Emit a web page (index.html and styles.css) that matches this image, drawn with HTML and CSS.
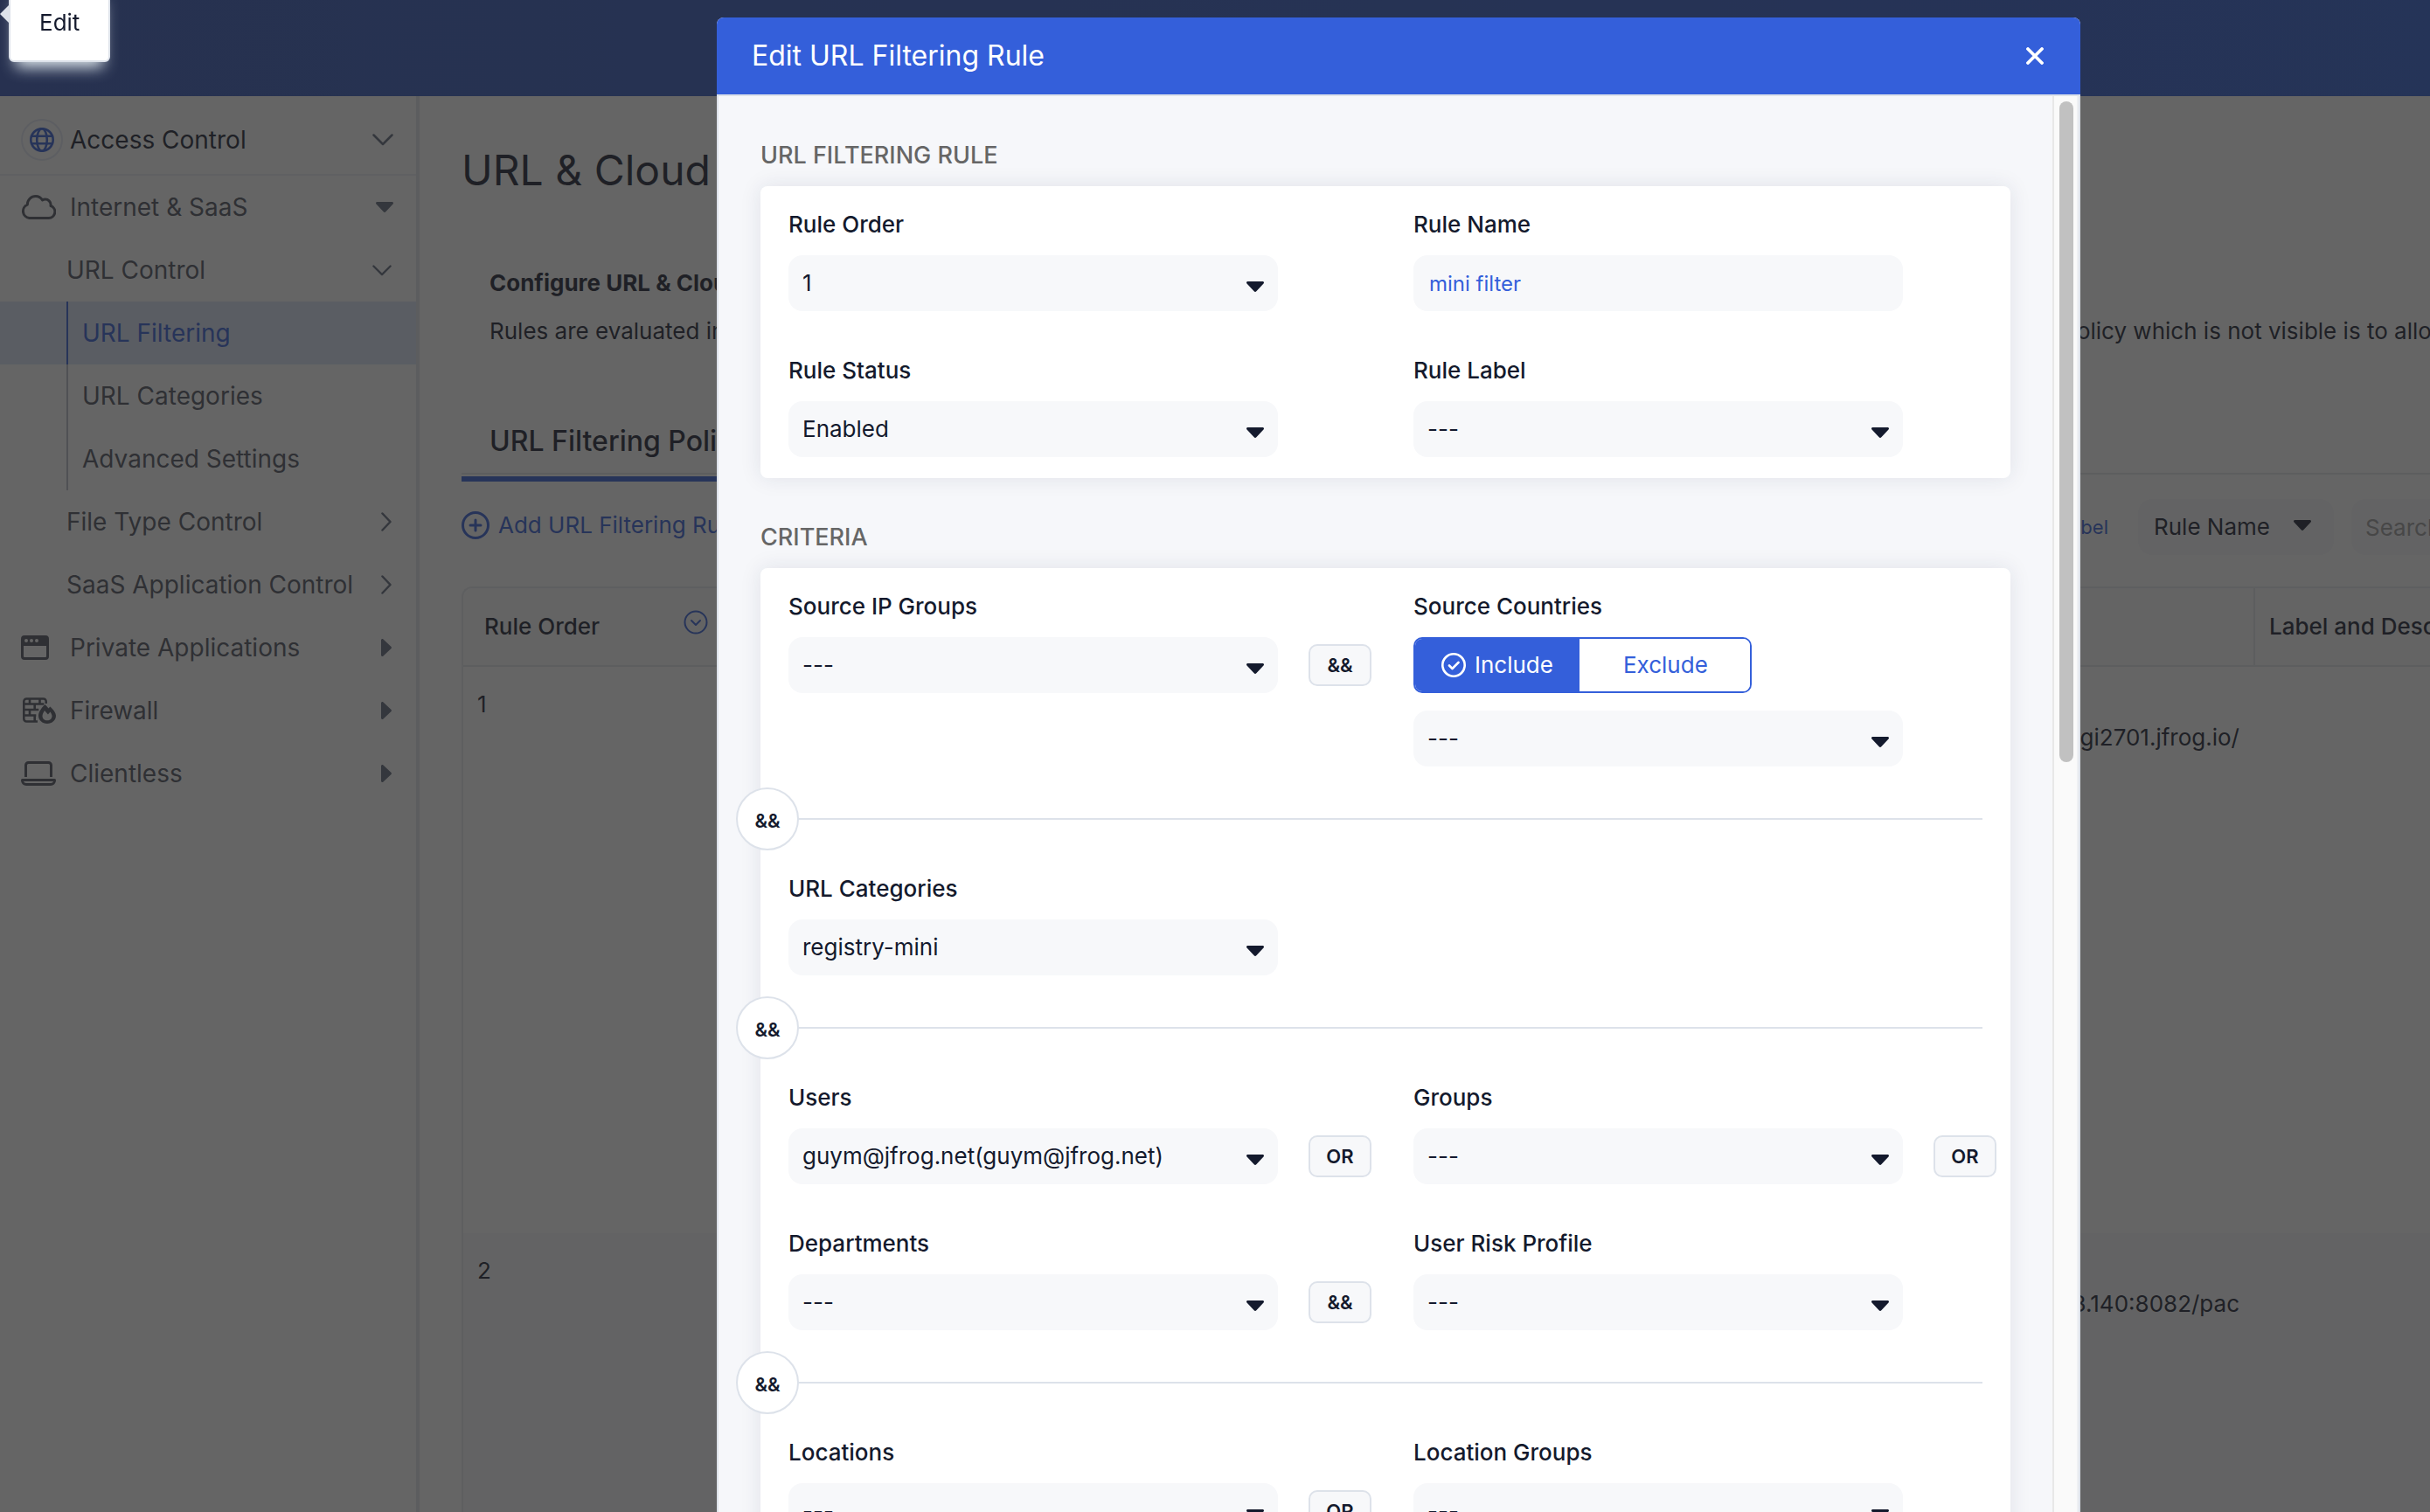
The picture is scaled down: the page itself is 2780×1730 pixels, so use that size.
FILE: index.html
```html
<!DOCTYPE html>
<html lang="en">
<head>
  <meta charset="UTF-8">
  <meta name="viewport" content="width=device-width, initial-scale=1.0">
  <title>Edit URL Filtering Rule</title>
  <link rel="stylesheet" href="styles.css">
</head>
<body>
  <!-- shared icons -->
  <svg class="sprite" aria-hidden="true">
    <symbol id="caret" viewBox="0 0 20 12"><path d="M1.5 0h17c1.4 0 2 1.600 1 2.500L11.300 11.300c-.7.8-1.900.8-2.600 0L.5 2.500C-.5 1.600.1 0 1.500 0z"/></symbol>
    <symbol id="caret-right" viewBox="0 0 12 20"><path d="M0 1.500v17c0 1.400 1.600 2 2.500 1L11.300 11.300c.8-.7.8-1.900 0-2.600L2.500.5C1.600-.5 0 .1 0 1.500z"/></symbol>
    <symbol id="chevron" viewBox="0 0 24 14"><path d="M1.500 1.500L12 12 22.500 1.500" fill="none" stroke="currentColor" stroke-width="2.500" stroke-linecap="round" stroke-linejoin="round"/></symbol>
    <symbol id="chevron-right" viewBox="0 0 12 22"><path d="M1.500 1.500L10.500 11 1.500 20.500" fill="none" stroke="currentColor" stroke-width="2.500" stroke-linecap="round" stroke-linejoin="round"/></symbol>
  </svg>

  <header class="topbar"></header>

  <div class="layout">
    <nav class="sidebar">
      <a class="nav-item nav-top" href="#">
        <span class="nav-icon">
          <svg class="line-icon globe" width="48" height="48" viewBox="0 0 48 48" stroke-width="2.600">
            <circle class="ring" cx="24" cy="24" r="23" stroke-width="2"/>
            <circle cx="24" cy="24" r="12.700"/>
            <ellipse cx="24" cy="24" rx="5.800" ry="12.700"/>
            <path d="M12 19.700h24M12 28.300h24"/>
          </svg>
        </span>
        <span class="nav-text">Access Control</span>
        <svg class="nav-arrow" width="24" height="14"><use href="#chevron"/></svg>
      </a>
      <a class="nav-item" href="#">
        <span class="nav-icon">
          <svg class="line-icon" width="40" height="28" viewBox="0 0 40 28" stroke-width="3" stroke-linejoin="round">
            <path d="M9.500 26.500A8 8 0 0 1 7.300 11.200C7.300 5.500 11.600 1.500 16.800 1.500c3.300 0 6.100 1.800 7.700 4.400 1-.6 2.100-.9 3.300-.9 3.500 0 6.300 2.800 6.300 6.300 0 .4 0 .8-.1 1.200A7.200 7.200 0 0 1 31.500 26.500z"/>
          </svg>
        </span>
        <span class="nav-text">Internet &amp; SaaS</span>
        <svg class="nav-arrow" width="20" height="12"><use href="#caret"/></svg>
      </a>
      <a class="nav-item nav-sub" href="#">
        <span class="nav-text">URL Control</span>
        <svg class="nav-arrow" width="22" height="13"><use href="#chevron"/></svg>
      </a>
      <a class="nav-item nav-leaf active" href="#"><span class="nav-text">URL Filtering</span></a>
      <a class="nav-item nav-leaf" href="#"><span class="nav-text">URL Categories</span></a>
      <a class="nav-item nav-leaf" href="#"><span class="nav-text">Advanced Settings</span></a>
      <a class="nav-item nav-sub" href="#">
        <span class="nav-text">File Type Control</span>
        <svg class="nav-arrow" width="12" height="22"><use href="#chevron-right"/></svg>
      </a>
      <a class="nav-item nav-sub" href="#">
        <span class="nav-text">SaaS Application Control</span>
        <svg class="nav-arrow" width="12" height="22"><use href="#chevron-right"/></svg>
      </a>
      <a class="nav-item nav-closed" href="#">
        <span class="nav-icon">
          <svg width="32" height="28" viewBox="0 0 32 28">
            <path fill-rule="evenodd" d="M4 0h24a4 4 0 0 1 4 4v20a4 4 0 0 1-4 4H4a4 4 0 0 1-4-4V4a4 4 0 0 1 4-4zM3 12v12a1 1 0 0 0 1 1h24a1 1 0 0 0 1-1V12zM6 4a2 2 0 1 0 0 4 2 2 0 0 0 0-4zm6 0a2 2 0 1 0 0 4 2 2 0 0 0 0-4zm6 0a2 2 0 1 0 0 4 2 2 0 0 0 0-4z"/>
          </svg>
        </span>
        <span class="nav-text">Private Applications</span>
        <svg class="nav-arrow" width="12" height="20"><use href="#caret-right"/></svg>
      </a>
      <a class="nav-item nav-closed" href="#">
        <span class="nav-icon">
          <svg class="line-icon" width="40" height="30" viewBox="0 0 40 30" stroke-width="2.600">
            <path d="M28.700 7V4.500a3 3 0 0 0-3-3H6.300a3 3 0 0 0-3 3v20a3 3 0 0 0 3 3H19"/>
            <path d="M3.300 7.500h23M3.300 14h17M3.300 20.500h14M10 1.500v6M21.500 1.500v6M15.700 7.500V14M10 14v6.500M15.700 20.500V27"/>
            <path fill="currentColor" fill-rule="evenodd" stroke="none" d="M27.500 8c1.600 1.400 2.900 2.900 4 4.500.6-.8 1.200-1.500 1.900-2.100 3.300 3 6.600 7.200 6.600 10.400C40 26 35.600 30 30 30s-10-4-10-9.200C20 17 23.300 11.800 27.500 8zm-3 13.300c0 3 2.400 5 5.500 5s5.500-2 5.500-5c0-1.300-.9-3.200-2-4.700l-2.600 3-3.900-4.600c-1.500 2.300-2.500 4.500-2.500 6.300z"/>
          </svg>
        </span>
        <span class="nav-text">Firewall</span>
        <svg class="nav-arrow" width="12" height="20"><use href="#caret-right"/></svg>
      </a>
      <a class="nav-item nav-closed" href="#">
        <span class="nav-icon">
          <svg class="line-icon" width="40" height="28" viewBox="0 0 40 28" stroke-width="3">
            <path d="M5.500 18V4.500a3 3 0 0 1 3-3h23a3 3 0 0 1 3 3V18M1.500 21.500h37v.5a4.500 4.500 0 0 1-4.500 4.500H6A4.500 4.500 0 0 1 1.500 22z" stroke-linejoin="round"/>
          </svg>
        </span>
        <span class="nav-text">Clientless</span>
        <svg class="nav-arrow" width="12" height="20"><use href="#caret-right"/></svg>
      </a>
    </nav>

    <main class="page">
      <h1>URL &amp; Cloud</h1>
      <div class="intro">
        <p class="intro-title">Configure URL &amp; Cloud App Control Policy</p>
        <p class="intro-text"><span>Rules are evaluated in order.</span><span class="intro-rest">policy which is not visible is to allow all</span></p>
      </div>

      <div class="tabs">
        <a class="tab" href="#">URL Filtering Policy</a>
      </div>

      <div class="toolbar">
        <button class="add-btn" type="button">
          <svg class="line-icon" width="32" height="32" viewBox="0 0 32 32" stroke-width="3" stroke-linecap="round">
            <circle cx="16" cy="16" r="14.500"/>
            <path d="M16 10v12M10 16h12"/>
          </svg>
          Add URL Filtering Rule
        </button>
        <div class="toolbar-right">
          <a class="small-link" href="#">Rule Label</a>
          <div class="select filter-select">
            <select aria-label="Search by"><option>Rule Name</option></select>
            <svg class="caret" width="20" height="12"><use href="#caret"/></svg>
          </div>
          <input class="search" type="text" placeholder="Search..." aria-label="Search">
        </div>
      </div>

      <table class="rules">
        <colgroup><col class="col-order"><col><col class="col-label"></colgroup>
        <thead>
          <tr>
            <th>
              <div class="th-order">Rule Order
                <svg class="line-icon" width="28" height="28" viewBox="0 0 28 28" stroke-width="2" stroke-linecap="round" stroke-linejoin="round">
                  <circle cx="14" cy="14" r="12.500"/>
                  <path d="M9 12l5 5 5-5"/>
                </svg>
              </div>
            </th>
            <th></th>
            <th>Label and Description</th>
          </tr>
        </thead>
        <tbody>
          <tr>
            <td>1</td>
            <td><div>URL</div><div class="url">digi2701.jfrog.io/</div></td>
            <td></td>
          </tr>
          <tr>
            <td>2</td>
            <td><div>URL</div><div class="url">3.140:8082/pac</div></td>
            <td></td>
          </tr>
        </tbody>
      </table>
    </main>
  </div>

  <div class="backdrop">
    <div class="modal" role="dialog" aria-labelledby="modal-title">
      <div class="modal-header">
        <h2 id="modal-title">Edit URL Filtering Rule</h2>
        <button class="close" type="button" aria-label="Close">
          <svg class="line-icon" width="20" height="20" viewBox="0 0 20 20" stroke-width="3.800" stroke-linecap="round"><path d="M2 2l16 16M18 2L2 18"/></svg>
        </button>
      </div>
      <div class="modal-body">
        <form class="modal-content">
          <h3>URL FILTERING RULE</h3>
          <section class="card">
            <div class="row">
              <div class="field">
                <label for="rule-order">Rule Order</label>
                <div class="select">
                  <select id="rule-order"><option>1</option></select>
                  <svg class="caret" width="20" height="12"><use href="#caret"/></svg>
                </div>
              </div>
              <div class="field">
                <label for="rule-name">Rule Name</label>
                <input id="rule-name" class="text-input" type="text" value="mini filter">
              </div>
            </div>
            <div class="row">
              <div class="field">
                <label for="rule-status">Rule Status</label>
                <div class="select">
                  <select id="rule-status"><option>Enabled</option></select>
                  <svg class="caret" width="20" height="12"><use href="#caret"/></svg>
                </div>
              </div>
              <div class="field">
                <label for="rule-label">Rule Label</label>
                <div class="select">
                  <select id="rule-label"><option>---</option></select>
                  <svg class="caret" width="20" height="12"><use href="#caret"/></svg>
                </div>
              </div>
            </div>
          </section>

          <h3>CRITERIA</h3>
          <section class="card">
            <div class="row">
              <div class="field">
                <label for="source-ip">Source IP Groups</label>
                <div class="select">
                  <select id="source-ip"><option>---</option></select>
                  <svg class="caret" width="20" height="12"><use href="#caret"/></svg>
                </div>
                <span class="op">&amp;&amp;</span>
              </div>
              <div class="field">
                <label for="source-countries">Source Countries</label>
                <div class="toggle">
                  <button class="on" type="button">
                    <svg class="line-icon" width="28" height="28" viewBox="0 0 28 28" stroke-width="2.600" stroke-linecap="round" stroke-linejoin="round">
                      <circle cx="14" cy="14" r="12.700"/>
                      <path d="M9 14.500l3.500 3.500 7-7"/>
                    </svg>
                    Include
                  </button>
                  <button type="button">Exclude</button>
                </div>
                <div class="select">
                  <select id="source-countries"><option>---</option></select>
                  <svg class="caret" width="20" height="12"><use href="#caret"/></svg>
                </div>
              </div>
            </div>

            <div class="divider"><span>&amp;&amp;</span></div>

            <div class="row">
              <div class="field">
                <label for="url-categories">URL Categories</label>
                <div class="select">
                  <select id="url-categories"><option>registry-mini</option></select>
                  <svg class="caret" width="20" height="12"><use href="#caret"/></svg>
                </div>
              </div>
            </div>

            <div class="divider"><span>&amp;&amp;</span></div>

            <div class="row">
              <div class="field">
                <label for="users">Users</label>
                <div class="select">
                  <select id="users"><option>guym@jfrog.net(guym@jfrog.net)</option></select>
                  <svg class="caret" width="20" height="12"><use href="#caret"/></svg>
                </div>
                <span class="op">OR</span>
              </div>
              <div class="field">
                <label for="groups">Groups</label>
                <div class="select">
                  <select id="groups"><option>---</option></select>
                  <svg class="caret" width="20" height="12"><use href="#caret"/></svg>
                </div>
                <span class="op">OR</span>
              </div>
            </div>
            <div class="row">
              <div class="field">
                <label for="departments">Departments</label>
                <div class="select">
                  <select id="departments"><option>---</option></select>
                  <svg class="caret" width="20" height="12"><use href="#caret"/></svg>
                </div>
                <span class="op">&amp;&amp;</span>
              </div>
              <div class="field">
                <label for="risk-profile">User Risk Profile</label>
                <div class="select">
                  <select id="risk-profile"><option>---</option></select>
                  <svg class="caret" width="20" height="12"><use href="#caret"/></svg>
                </div>
              </div>
            </div>

            <div class="divider"><span>&amp;&amp;</span></div>

            <div class="row">
              <div class="field">
                <label for="locations">Locations</label>
                <div class="select">
                  <select id="locations"><option>---</option></select>
                  <svg class="caret" width="20" height="12"><use href="#caret"/></svg>
                </div>
                <span class="op">OR</span>
              </div>
              <div class="field">
                <label for="location-groups">Location Groups</label>
                <div class="select">
                  <select id="location-groups"><option>---</option></select>
                  <svg class="caret" width="20" height="12"><use href="#caret"/></svg>
                </div>
              </div>
            </div>
          </section>
        </form>
        <div class="scrollbar"><div class="thumb"></div></div>
      </div>
    </div>
  </div>

  <div class="tooltip">Edit</div>
</body>
</html>
```

FILE: styles.css
```css
* {
  box-sizing: border-box;
}

body {
  margin: 0;
  height: 100vh;
  overflow: hidden;
  display: flex;
  flex-direction: column;
  font-family: Inter, "Liberation Sans", sans-serif;
  font-size: 26px;
  line-height: 38px;
  color: #141a2d;
  background: #fff;
}

h1, h2, h3, p {
  margin: 0;
  font-weight: 400;
}

a {
  color: inherit;
  text-decoration: none;
}

button, input, select {
  font: inherit;
  color: inherit;
  border: 0;
  margin: 0;
}

svg {
  flex: none;
  fill: currentColor;
}

.line-icon {
  fill: none;
  stroke: currentColor;
}

.sprite {
  position: absolute;
  width: 0;
  height: 0;
}

.topbar {
  flex: none;
  height: 110px;
  background: linear-gradient(90deg, #2f53b7, #2b5ad2);
}

.layout {
  flex: 1;
  display: flex;
  min-height: 0;
}

/* sidebar */
.sidebar {
  flex: none;
  width: 480px;
  border-right: 4px solid #e0e4ec;
  font-size: 28px;
  color: #4b4f5c;
}

.nav-item {
  display: flex;
  align-items: center;
  height: 72px;
  padding: 0 26px 0 24px;
}

.nav-icon {
  display: flex;
  width: 56px;
}

.nav-text {
  flex: 1;
  white-space: nowrap;
}

.nav-arrow {
  color: #5b6478;
}

.nav-top {
  height: 91px;
  padding-top: 10px;
  border-bottom: 2px solid #eceff3;
  color: #141a2d;
}

.globe {
  color: #2f5bd8;
}

.ring {
  stroke: #e3e8f3;
}

.nav-sub {
  padding-left: 76px;
}

.nav-sub .nav-arrow,
.nav-closed .nav-arrow {
  margin-right: 2px;
}

.nav-leaf {
  padding-left: 76px;
}

.nav-leaf .nav-text {
  padding-left: 16px;
  border-left: 2px solid #b9bdc9;
  line-height: 72px;
}

.nav-leaf.active {
  background: #dbe4f9;
  color: #2f5bd8;
}

.nav-leaf.active .nav-text {
  border-color: #2f5bd8;
}

/* page under the dialog */
.page {
  flex: 1;
  min-width: 0;
  overflow: hidden;
  padding: 55px 0 0 48px;
  white-space: nowrap;
}

h1 {
  font-size: 48px;
  line-height: 60px;
}

.intro {
  margin-top: 80px;
  padding-left: 32px;
}

.intro-title {
  font-weight: 700;
}

.intro-text {
  display: flex;
  justify-content: space-between;
  margin-top: 17px;
}

.intro-rest {
  width: 420px;
}

.tabs {
  display: flex;
  margin-top: 88px;
  border-bottom: 2px solid #e4e7ec;
}

.tab {
  position: relative;
  padding: 0 32px 17px;
  font-size: 32px;
  font-weight: 500;
}

.tab::after {
  content: "";
  position: absolute;
  left: 0;
  right: 0;
  bottom: -10px;
  height: 6px;
  background: #2f5bd8;
}

.toolbar {
  display: flex;
  align-items: center;
  justify-content: space-between;
  margin-top: 28px;
}

.add-btn {
  display: flex;
  align-items: center;
  gap: 10px;
  padding: 0 0 4px;
  background: none;
  color: #2f5bd8;
}

.toolbar-right {
  display: flex;
  align-items: center;
  gap: 20px;
  margin-right: -210px;
}

.small-link {
  margin-right: 14px;
  font-size: 22px;
  color: #2f5bd8;
}

.filter-select {
  width: 224px;
}

.search {
  width: 300px;
  height: 64px;
  padding: 0 16px;
  border-radius: 16px;
  background: #f7f8fa;
}

.search::placeholder {
  color: #9a9a9a;
}

.rules {
  width: 100%;
  margin-top: 36px;
  table-layout: fixed;
  border-collapse: separate;
  border-spacing: 0;
  border: 2px solid #e8eaee;
  border-right: 0;
  border-radius: 12px 0 0 0;
}

.col-order {
  width: 300px;
}

.col-label {
  width: 202px;
}

.rules th {
  height: 90px;
  padding: 0 0 0 24px;
  background: #fafbfc;
  border-bottom: 2px solid #e4e7ec;
  border-radius: 12px 0 0 0;
  font-weight: 500;
  text-align: left;
}

.rules th:last-child {
  padding-left: 16px;
  border-left: 2px solid #e4e7ec;
  border-radius: 0;
}

.th-order {
  display: flex;
  justify-content: space-between;
  padding-right: 20px;
}

.th-order svg {
  color: #2f5bd8;
}

.rules td {
  height: 648px;
  padding: 24px 16px;
  vertical-align: top;
}

.rules tbody tr:nth-child(even) td {
  background: #f7f8fa;
}

.url {
  text-align: right;
}

/* dialog */
.backdrop {
  position: fixed;
  inset: 0;
  padding: 20px 400px 0 820px;
  background: rgba(36, 36, 36, 0.7);
}

.modal {
  display: flex;
  flex-direction: column;
  height: 100%;
  border-radius: 8px 8px 0 0;
  overflow: hidden;
  background: #f6f7fa;
}

.modal-header {
  flex: none;
  display: flex;
  align-items: center;
  justify-content: space-between;
  height: 88px;
  padding: 0 42px 0 40px;
  background: #345fda;
  color: #fff;
}

.modal-header h2 {
  font-size: 32px;
}

.close {
  display: flex;
  padding: 0;
  background: none;
}

.modal-body {
  flex: 1;
  display: flex;
  min-height: 0;
  border: 2px solid #dde2ea;
  border-bottom: 0;
}

.modal-content {
  flex: 1;
  overflow: hidden;
  padding: 0 48px;
}

h3 {
  margin: 49px 0 16px;
  font-size: 27px;
  font-weight: 500;
  color: #666;
}

.card {
  padding: 25px 16px 24px 32px;
  border-radius: 8px;
  background: #fff;
  box-shadow: 0 0 24px rgba(30, 40, 80, 0.1);
}

.row {
  display: grid;
  grid-template-columns: 1fr 1fr;
  gap: 48px;
}

.row + .row {
  margin-top: 49px;
}

/* the narrow column holds the operator joining two fields */
.field {
  display: grid;
  grid-template-columns: 1fr 72px;
  column-gap: 35px;
  align-items: center;
  align-content: start;
}

.field label {
  grid-column: 1 / -1;
  margin-bottom: 16px;
  font-weight: 500;
}

.select {
  position: relative;
}

.select select {
  display: block;
  width: 100%;
  height: 64px;
  padding: 0 48px 0 16px;
  appearance: none;
  border-radius: 16px;
  background: #f7f8fa;
}

.filter-select select {
  padding-left: 18px;
}

.caret {
  position: absolute;
  right: 16px;
  top: 30px;
  pointer-events: none;
}

.filter-select .caret {
  right: 26px;
  top: 24px;
}

.text-input {
  width: 100%;
  min-width: 0;
  height: 64px;
  padding: 0 18px;
  border-radius: 16px;
  background: #f7f8fa;
  font-size: 24px;
  color: #345fda;
}

.op {
  display: flex;
  align-items: center;
  justify-content: center;
  height: 48px;
  border: 2px solid #dde2ea;
  border-radius: 10px;
  background: #f7f8fa;
  font-size: 22px;
  font-weight: 600;
}

.toggle {
  grid-column: 1 / -1;
  justify-self: start;
  display: flex;
  height: 64px;
  margin-bottom: 20px;
  border: 2px solid #345fda;
  border-radius: 10px;
  overflow: hidden;
}

.toggle button {
  display: flex;
  align-items: center;
  gap: 10px;
  padding: 0 48px 0 50px;
  background: #fff;
  color: #345fda;
}

.toggle .on {
  padding: 0 30px;
  background: #345fda;
  color: #fff;
}

.divider {
  position: relative;
  height: 2px;
  margin: 59px 16px 60px 0;
  background: #dde2ea;
}

.divider span {
  position: absolute;
  left: -60px;
  top: -35px;
  display: flex;
  align-items: center;
  justify-content: center;
  width: 72px;
  height: 72px;
  padding-top: 4px;
  border: 2px solid #dde2ea;
  border-radius: 50%;
  background: #fff;
  font-size: 22px;
  font-weight: 600;
}

.scrollbar {
  flex: none;
  width: 30px;
  padding: 6px;
  border-left: 2px solid #e8e8e8;
  border-right: 2px solid #eef0f3;
  background: #fafafa;
}

.thumb {
  width: 16px;
  height: 756px;
  border-radius: 8px;
  background: #c1c1c1;
}

.tooltip {
  position: fixed;
  left: 10px;
  top: -20px;
  padding: 25px 33px;
  height: 91px;
  border: 2px solid #dde2ea;
  border-radius: 6px;
  background: #fff;
  box-shadow: 0 14px 16px -8px #dbe4ea;
}

.tooltip::before {
  content: "";
  position: absolute;
  left: -12px;
  top: 24px;
  border: 10px solid transparent;
  border-right-color: #dde2ea;
  border-left: 0;
}
```
